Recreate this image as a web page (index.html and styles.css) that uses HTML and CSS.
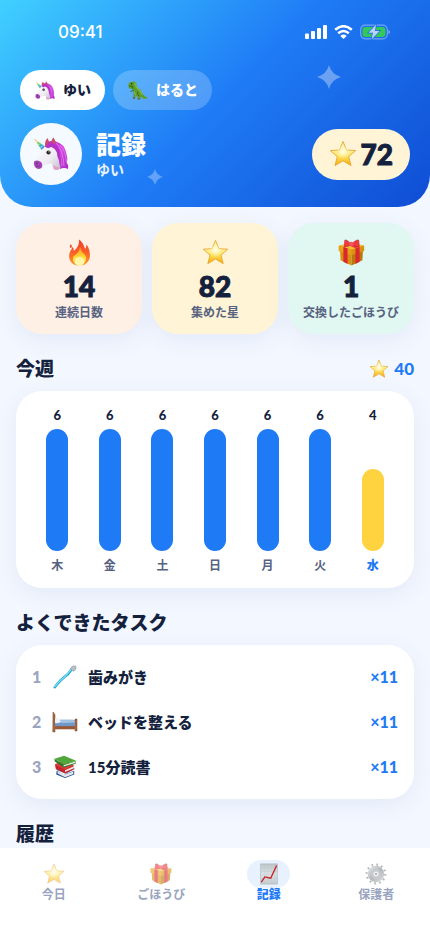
FILE: index.html
```html
<!DOCTYPE html>
<html lang="ja">
<head>
<meta charset="utf-8">
<meta name="viewport" content="width=device-width, initial-scale=1">
<title>記録</title>
<link rel="stylesheet" href="styles.css">
</head>
<body>
<svg class="defs" aria-hidden="true">
  <defs>
    <linearGradient id="gold" x1="0" y1="0" x2="0" y2="1"><stop offset="0" stop-color="#fff3a0"/><stop offset=".3" stop-color="#fff4b5"/><stop offset=".58" stop-color="#ffe566"/><stop offset="1" stop-color="#f9a90c"/></linearGradient>
    <radialGradient id="glow"><stop offset="0" stop-color="#fffff0"/><stop offset="1" stop-color="#fff8bd" stop-opacity="0"/></radialGradient>
    <linearGradient id="flame" x1="0" y1="0" x2="0" y2="1"><stop offset="0" stop-color="#ef3b24"/><stop offset=".55" stop-color="#fb652b"/><stop offset="1" stop-color="#ff9c28"/></linearGradient>
    <linearGradient id="core" x1="0" y1="0" x2="0" y2="1"><stop offset="0" stop-color="#ff9429"/><stop offset=".5" stop-color="#ffd52f"/><stop offset="1" stop-color="#fff56e"/></linearGradient>
    <linearGradient id="horn" x1="0" y1="0" x2="1" y2="1"><stop offset="0" stop-color="#f78c57"/><stop offset=".25" stop-color="#efd34b"/><stop offset=".5" stop-color="#42c885"/><stop offset=".75" stop-color="#3ba6e9"/><stop offset="1" stop-color="#7a53d1"/></linearGradient>
    <linearGradient id="face" x1="0" y1="0" x2="1" y2="1"><stop offset="0" stop-color="#fff"/><stop offset=".6" stop-color="#eeebf2"/><stop offset="1" stop-color="#c4bccd"/></linearGradient>
    <linearGradient id="mane" x1="0" y1="0" x2="1" y2="1"><stop offset="0" stop-color="#a92bc7"/><stop offset=".5" stop-color="#d548e2"/><stop offset="1" stop-color="#a72bc4"/></linearGradient>
    <linearGradient id="paper" x1="0" y1="0" x2="0" y2="1"><stop offset="0" stop-color="#bcc6cb"/><stop offset=".5" stop-color="#dce3e6"/><stop offset="1" stop-color="#c3ccd0"/></linearGradient>
    <linearGradient id="metal" x1="0" y1="0" x2="1" y2="1"><stop offset="0" stop-color="#c9cdd0"/><stop offset=".5" stop-color="#858a8e"/><stop offset="1" stop-color="#b9bec1"/></linearGradient>
    <symbol id="star" viewBox="0 0 28 28"><path d="M14 1.500 17.500 10 26.700 10.600 19.700 16.600 22 25.600 14 20.800 6 25.600 8.300 16.600 1.300 10.600 10.500 10Z" fill="url(#gold)" stroke="#e6a62d" stroke-width=".9" stroke-linejoin="round"/><circle cx="14" cy="12" r="7" fill="url(#glow)"/></symbol>
    <symbol id="fire" viewBox="0 0 26 26"><path d="M12.500.5C17 4 17.500 7.500 18.500 9.500 19.500 8.300 19.800 6.500 19.700 5 22.500 9 23.300 13 23 17 22.500 22 18.500 25.500 13 25.500 7 25.500 3 22 3 16.500 3 12.500 5 10.500 6.500 7.500 7.500 9 7.500 10.500 7.500 11.500 11.500 8.500 13 4.500 12.500.5Z" fill="url(#flame)"/><path d="M4.500 5Q6.500 6 5 9 2.500 7.500 4.500 5Z" fill="#f04a27"/><path d="M13.500 8Q15 13 18 15 20.500 18.500 18.500 22 16.500 25.200 13 25.200 8 25 6.800 20.500 6 16.500 9 15.500 12.500 13 13.500 8Z" fill="url(#core)"/><circle cx="13" cy="21.500" r="4.500" fill="#fffac2" opacity=".8"/></symbol>
    <symbol id="gift" viewBox="0 0 26 26"><path d="M2 11 13 15V25.500L2.500 20.500Z" fill="#d9910d"/><path d="M24 11 13 15V25.500L23.500 20.500Z" fill="#bd780c"/><path d="M.8 6.500 13 3.500 25.200 6.500V11.500L13 15.300.8 11.500Z" fill="#d8930f"/><path d="M.8 6.500 13 10 25.200 6.500 13 4Z" fill="#f3bd3a"/><path d="m.8 6.500 12.200 3.500v5.300L.8 11.500Z" fill="#e5a21b"/><path d="m5.200 7.800 4 1.200V24L5.200 22ZM20.800 7.800l-4 1.200V24l4-2Z" fill="#dc2630"/><path d="m5.200 7.800 12-3 3.600 3-4 1.200L8 5Z" fill="#e63a3b"/><path d="M13 5Q8-.2 6.500 1.200L6 7.200Q10 8 13 5ZM13 5Q18-.2 20 1.200L20.500 7.200Q16 8 13 5Z" fill="#ef3a42" stroke="#b91d2b" stroke-width=".5"/><circle cx="13" cy="4.800" r="2.200" fill="#f45356"/></symbol>
    <symbol id="unicorn" viewBox="0 0 36 34"><path d="M14 6Q19 2 24 5 31 7 33 15 35 21 34 26 36 29 35 32 31 30 27 32L22 18Z" fill="url(#mane)"/><path d="M23 6Q30 12 31 29M27 8Q33 14 33.500 26M24 12Q28 18 29 29" fill="none" stroke="#ee8bf0" stroke-width=".7"/><path d="M11 10Q15 5 21 8 26 12 26 19 25 23 27.500 31 24 34.500 20 31.500L19 26.500Q13 26 10 29 8 33 4 31.500 0 29 1 25 5 20 7 15 8 11 11 10Z" fill="url(#face)"/><path d="M1.500 24Q5 22.500 8 25 10 27 8.800 30.500 6.500 33 3 31-.2 28 1.500 24Z" fill="#a244b5"/><path d="M20 28Q24 31 27 30 26 34 21 32.500Z" fill="#dfa0c1"/><path d="M1 1.500 8.500 13 12 9.500Z" fill="url(#horn)"/><path d="m4.500 4-1.500 1.500m4 1-2 2m4.500.3-2.500 2.700" stroke="#fff" stroke-width=".6"/><path d="M12 10Q11.500 4 14.500 1 17 5 16.500 9ZM18.500 8.500Q17.500 3 20.500.5 23.500 5 22 10Z" fill="#d04a6b"/><path d="M12.500 10Q15 5 19 6 26 8 27 15 28 22 28.500 27 24 21 24 16 22 11 18 10 15 12 12.500 10Z" fill="#b532ca"/><circle cx="15.500" cy="15.500" r="2.100" fill="#282326"/><circle cx="16" cy="14.800" r=".6" fill="#fff"/><ellipse cx="3.800" cy="26.500" rx=".8" ry="1" fill="#682777"/><path d="M3 29.500 7 29" stroke="#752a82" stroke-width=".7"/></symbol>
    <symbol id="dino" viewBox="0 0 22 20"><path d="M1 3Q2 .5 5 .7 9 .2 9.500 4 9.500 6 10.500 7 14 9 15.500 12.500 17.500 16.500 21.500 17.500 18 20 14.500 17L13.500 16.500 13.500 19H10.500L10.500 16.500 8.500 15.500 8 18H5.500L6.500 14 6 10.500 5 8.500 2 8 1 6.500Z" fill="#5e9e2b"/><path d="m1.500 5.300 4 .2-.8 1.500 1.300 1M6.500 10 4 10.500l-.7 1M11 11Q9 13.500 12.500 16" fill="none" stroke="#315f19" stroke-width=".9"/><path d="M7.500 2Q8.500 6 11 8.500 14 11 15.500 14.500" fill="none" stroke="#86bb3b" stroke-width="1.300"/><circle cx="4.300" cy="2.900" r=".7" fill="#19220f"/><path d="M7 10.500 8.500 15" stroke="#99ae42"/><path d="M5.500 18H8M10.500 19h3" stroke="#745634" stroke-width="1.200"/></symbol>
    <symbol id="brush" viewBox="0 0 26 26"><path d="M2 24Q4 21 8 17T16 10L21 3.500" fill="none" stroke="#159bc8" stroke-width="2.800" stroke-linecap="round"/><path d="M2 23.500Q5 19 9 16T16 9L21 3.500" fill="none" stroke="#78e0f7" stroke-width="1.500" stroke-linecap="round"/><path d="m19 3.500 3-2.700 3 .7-.3 3.300-2.700 2.200Z" fill="#b8bfc7" stroke="#8995a2" stroke-width=".6"/></symbol>
    <symbol id="bed" viewBox="0 0 26 22"><path d="M1 1Q2.500 2.500 3 4V15H23V8H25V20H23V18H3V21H.8Z" fill="#aa6b42" stroke="#754426" stroke-width=".5"/><path d="M3 9H23V15.500H3Z" fill="#7098c8"/><path d="M8 8.500H21Q23 9 23 11.500L11 12Q8 12 8 8.500Z" fill="#a3c1e2"/><path d="M3 8Q5 6.500 7 7.500L9 11Q7 12.500 3 12Z" fill="#edf2f8"/><path d="M3 15.300H23V18H3Z" fill="#9a5833"/></symbol>
    <symbol id="books" viewBox="0 0 26 26"><path d="m4 17 8 4 11-4v4l-10 4L3.500 21Z" fill="#2a4b95"/><path d="m5 18 8 3 9-3v2.500l-9 3.500-8-4Z" fill="#e6e9e8"/><path d="m3 16 9-4 12 3-10 5Z" fill="#3a69b6"/><path d="m2 10 11 5 9-4v5l-9 4-10-5Z" fill="#c8232b"/><path d="m13 16.500 9-4v2l-9 4Z" fill="#eee9df"/><path d="m2 10 9-4 12 5-10 5Z" fill="#de383a"/><path d="m1.500 4 10 6.500 13-4v3l-13 4L2 7Z" fill="#277b28"/><path d="M11.500 11 24 7v1.800l-12.500 3.700Z" fill="#eeeede"/><path d="M1.500 4 12 .8 25 6.300l-13 4.200Z" fill="#51a63c"/></symbol>
    <symbol id="chart" viewBox="0 0 22 26"><path d="M1 1H21V25H1Z" fill="url(#paper)" stroke="#a5afb5" stroke-width=".6"/><path d="M6 2V24M10 2V24M14 2V24M18 2V24M2 6H20M2 10H20M2 14H20M2 18H20" stroke="#b7c1c6" stroke-width=".3"/><path d="m2 22.500 4-6L13 18 20 3" fill="none" stroke="#c91f25" stroke-width="1.600"/></symbol>
    <symbol id="gear" viewBox="0 0 26 26"><circle cx="13" cy="13" r="11" fill="none" stroke="#858a8f" stroke-width="2.600" stroke-dasharray="2 3.760"/><circle cx="13" cy="13" r="7.500" fill="none" stroke="url(#metal)" stroke-width="4.500"/><circle cx="13" cy="13" r="5" fill="#aeb4b8" stroke="#747b80" stroke-width=".7"/><circle cx="13" cy="13" r="3.300" fill="#ebedef" stroke="#949ba0" stroke-width=".6"/><circle cx="13" cy="13" r="1.200" fill="#5d6266"/></symbol>
    <symbol id="sparkle" viewBox="0 0 24 24"><path d="M12 0Q14.500 9.500 24 12 14.500 14.500 12 24 9.500 14.500 0 12 9.500 9.500 12 0Z" fill="#fff"/></symbol>
  </defs>
</svg>
<div class="app">
  <header class="hero">
    <div class="status">
      <time>09:41</time>
      <div class="signals">
        <svg width="22" height="14" viewBox="0 0 22 14" aria-hidden="true"><path d="M0 9.500Q0 8.500 1 8.500H3Q4 8.500 4 9.500V13Q4 14 3 14H1Q0 14 0 13ZM6 7Q6 6 7 6H9Q10 6 10 7V13Q10 14 9 14H7Q6 14 6 13ZM12 4Q12 3 13 3H15Q16 3 16 4V13Q16 14 15 14H13Q12 14 12 13ZM18 1Q18 0 19 0H21Q22 0 22 1V13Q22 14 21 14H19Q18 14 18 13Z" fill="#fff"/></svg>
        <svg width="19" height="14" viewBox="0 0 19 14" aria-hidden="true"><path d="M1.200 4.800Q9.500-2.300 17.800 4.800M4.200 8.300Q9.500 3.700 14.800 8.300" fill="none" stroke="#fff" stroke-width="2.600"/><path d="M6.300 11Q9.500 8.200 12.700 11L9.500 14Z" fill="#fff"/></svg>
        <svg width="30" height="16" viewBox="0 0 30 16" aria-hidden="true"><rect x=".7" y="1.200" width="26.600" height="13.600" rx="4.500" fill="none" stroke="#fff" stroke-opacity=".38" stroke-width="1.200"/><path d="M28.500 6Q30 6.500 30 8T28.500 10Z" fill="#fff" opacity=".5"/><rect x="2.500" y="3" width="23" height="10" rx="3" fill="#34c759"/><path d="M16 .5 8.500 8.800H13L11.500 15.500 19.500 7H15Z" fill="#b9d2fa" stroke="#1a6ee9" stroke-width="1.400" paint-order="stroke"/></svg>
      </div>
    </div>
    <div class="profiles">
      <button class="profile profile-active" type="button"><svg class="profile-icon" aria-hidden="true"><use href="#unicorn"/></svg>ゆい</button>
      <button class="profile" type="button"><svg class="profile-icon" aria-hidden="true"><use href="#dino"/></svg>はると</button>
    </div>
    <div class="identity">
      <div class="avatar"><svg aria-hidden="true"><use href="#unicorn"/></svg></div>
      <div class="names"><h1>記録</h1><p>ゆい</p></div>
      <div class="balance"><svg aria-hidden="true"><use href="#star"/></svg>72</div>
    </div>
    <svg class="sparkle sparkle-large" aria-hidden="true"><use href="#sparkle"/></svg>
    <svg class="sparkle sparkle-small" aria-hidden="true"><use href="#sparkle"/></svg>
  </header>
  <main>
    <section class="stats">
      <div class="stat peach"><svg aria-hidden="true"><use href="#fire"/></svg><strong>14</strong><span>連続日数</span></div>
      <div class="stat cream"><svg aria-hidden="true"><use href="#star"/></svg><strong>82</strong><span>集めた星</span></div>
      <div class="stat mint"><svg aria-hidden="true"><use href="#gift"/></svg><strong>1</strong><span>交換したごほうび</span></div>
    </section>
    <section>
      <div class="heading"><h2>今週</h2><div class="week-total"><svg aria-hidden="true"><use href="#star"/></svg>40</div></div>
      <div class="card week">
        <div class="day"><b>6</b><div class="track"><div class="bar"></div></div><span>木</span></div>
        <div class="day"><b>6</b><div class="track"><div class="bar"></div></div><span>金</span></div>
        <div class="day"><b>6</b><div class="track"><div class="bar"></div></div><span>土</span></div>
        <div class="day"><b>6</b><div class="track"><div class="bar"></div></div><span>日</span></div>
        <div class="day"><b>6</b><div class="track"><div class="bar"></div></div><span>月</span></div>
        <div class="day"><b>6</b><div class="track"><div class="bar"></div></div><span>火</span></div>
        <div class="day today"><b>4</b><div class="track"><div class="bar" style="height:67%"></div></div><span>水</span></div>
      </div>
    </section>
    <section>
      <div class="heading"><h2>よくできたタスク</h2></div>
      <ol class="card tasks">
        <li><span class="rank">1</span><svg aria-hidden="true"><use href="#brush"/></svg><span class="task">歯みがき</span><span class="count">×11</span></li>
        <li><span class="rank">2</span><svg aria-hidden="true"><use href="#bed"/></svg><span class="task">ベッドを整える</span><span class="count">×11</span></li>
        <li><span class="rank">3</span><svg aria-hidden="true"><use href="#books"/></svg><span class="task">15分読書</span><span class="count">×11</span></li>
      </ol>
    </section>
    <section><div class="heading"><h2>履歴</h2></div></section>
  </main>
  <nav>
    <a href="#"><span class="tab-icon"><svg aria-hidden="true"><use href="#star"/></svg></span>今日</a>
    <a href="#"><span class="tab-icon"><svg aria-hidden="true"><use href="#gift"/></svg></span>ごほうび</a>
    <a href="#" class="current" aria-current="page"><span class="tab-icon"><svg aria-hidden="true"><use href="#chart"/></svg></span>記録</a>
    <a href="#"><span class="tab-icon"><svg aria-hidden="true"><use href="#gear"/></svg></span>保護者</a>
  </nav>
</div>
</body>
</html>
```
FILE: styles.css
```css
* { box-sizing: border-box; }
body { margin: 0; color: #14213d; background: #f3f7ff; font-family: Lato, "Noto Sans CJK JP", sans-serif; font-weight: 900; }
h1, h2, p { margin: 0; }
h1, h2, b, strong { font-weight: 900; }
svg { display: block; flex: none; }
.defs { position: absolute; width: 0; height: 0; }
.app { height: 100vh; display: flex; flex-direction: column; }
.hero { position: relative; flex: none; padding: 20px 20px 22px; border-radius: 0 0 32px 32px; background: linear-gradient(135deg, #40d0ff 0%, #1f7cf6 50%, #0f4dd4 100%); color: #fff; }
.status { height: 24px; display: flex; align-items: center; justify-content: space-between; padding: 0 20px 0 38px; }
.status time { font: 500 17px/24px Inter, sans-serif; }
.signals { display: flex; align-items: center; gap: 7px; }
.profiles { display: flex; gap: 8px; margin-top: 26px; }
.profile { height: 40px; display: flex; align-items: center; gap: 7px; padding: 0 14px; border: 0; border-radius: 20px; background: rgb(255 255 255 / 22%); color: #fff; font: inherit; font-size: 14px; line-height: 20px; }
.profile-active { background: #fff; color: #14213d; }
.profile-icon { width: 22px; height: 19px; }
.identity { display: flex; align-items: center; gap: 14px; margin-top: 13px; }
.avatar { width: 62px; height: 62px; display: grid; place-items: center; border-radius: 50%; background: #f4faff; }
.avatar svg { width: 36px; height: 34px; }
.names { flex: 1; }
.names h1 { font-size: 25px; line-height: 32px; }
.names p { font-size: 14px; line-height: 20px; font-weight: 700; opacity: .9; }
.balance { height: 51px; display: flex; align-items: center; gap: 4px; padding: 0 17px; border-radius: 26px; background: #fff4d6; color: #14213d; font-size: 28px; line-height: 32px; -webkit-text-stroke: 1px currentColor; }
.balance svg { width: 28px; height: 28px; }
.sparkle { position: absolute; }
.sparkle-large { width: 24px; height: 24px; right: 89px; top: 65px; opacity: .35; }
.sparkle-small { width: 16px; height: 16px; left: 147px; top: 169px; opacity: .3; }
main { flex: 1; min-height: 0; overflow: hidden auto; scrollbar-width: none; padding: 16px; }
.stats { display: grid; grid-template-columns: repeat(3, minmax(0, 1fr)); gap: 10px; }
.stat { height: 111px; display: flex; flex-direction: column; align-items: center; padding-top: 16px; border-radius: 26px; box-shadow: 0 6px 24px rgb(38 76 153 / 8%); white-space: nowrap; }
.stat svg { width: 27px; height: 27px; }
.stat strong { font-size: 28px; line-height: 34px; margin-top: 3px; -webkit-text-stroke: 1px currentColor; }
.stat span { font-size: 12px; line-height: 20px; color: #56627f; font-weight: 700; }
.peach { background: #fff0e6; }
.cream { background: #fff4d5; }
.mint { background: #e1f7f1; }
.heading { display: flex; align-items: center; justify-content: space-between; padding: 20px 0 8px; }
h2 { font-size: 19px; line-height: 29px; }
.week-total { display: flex; align-items: center; gap: 5px; font-size: 17px; line-height: 24px; color: #1f7af5; }
.week-total svg { width: 20px; height: 20px; }
.card { background: #fff; border-radius: 26px; box-shadow: 0 6px 24px rgb(38 76 153 / 8%); }
.week { display: grid; grid-template-columns: repeat(7, 1fr); padding: 16px 15px 14px; }
.day { display: flex; flex-direction: column; align-items: center; }
.day b { font-size: 13px; line-height: 16px; }
.track { height: 122px; display: flex; align-items: flex-end; margin: 6px 0; }
.bar { width: 22px; height: 100%; border-radius: 11px; background: #1f7af5; }
.day span { font-size: 12px; line-height: 17px; font-weight: 700; color: #56627f; }
.today .bar { background: #ffd23f; }
.today span { color: #1f7af5; font-weight: 900; }
.tasks { list-style: none; margin: 0; padding: 9px 16px 10px; }
.tasks li { height: 45px; display: flex; align-items: center; font-size: 15px; line-height: 22px; }
.tasks svg { width: 26px; height: 24px; margin-right: 10px; }
.rank { width: 20px; color: #99a4c0; font-size: 16px; }
.task { flex: 1; }
.count { color: #1f7af5; font-size: 16px; }
nav { flex: none; height: 86px; display: grid; grid-template-columns: repeat(4, 1fr); padding-top: 12px; background: #fff; }
nav a { display: flex; flex-direction: column; align-items: center; color: #99a4c0; text-decoration: none; font-size: 12px; line-height: 14px; font-weight: 700; }
.tab-icon { width: 43px; height: 28px; display: grid; place-items: center; border-radius: 14px; }
.tab-icon svg { width: 22px; height: 22px; opacity: .6; }
.current { color: #1f7af5; font-weight: 900; }
.current .tab-icon { background: #e8f2ff; }
.current .tab-icon svg { opacity: 1; }
```
